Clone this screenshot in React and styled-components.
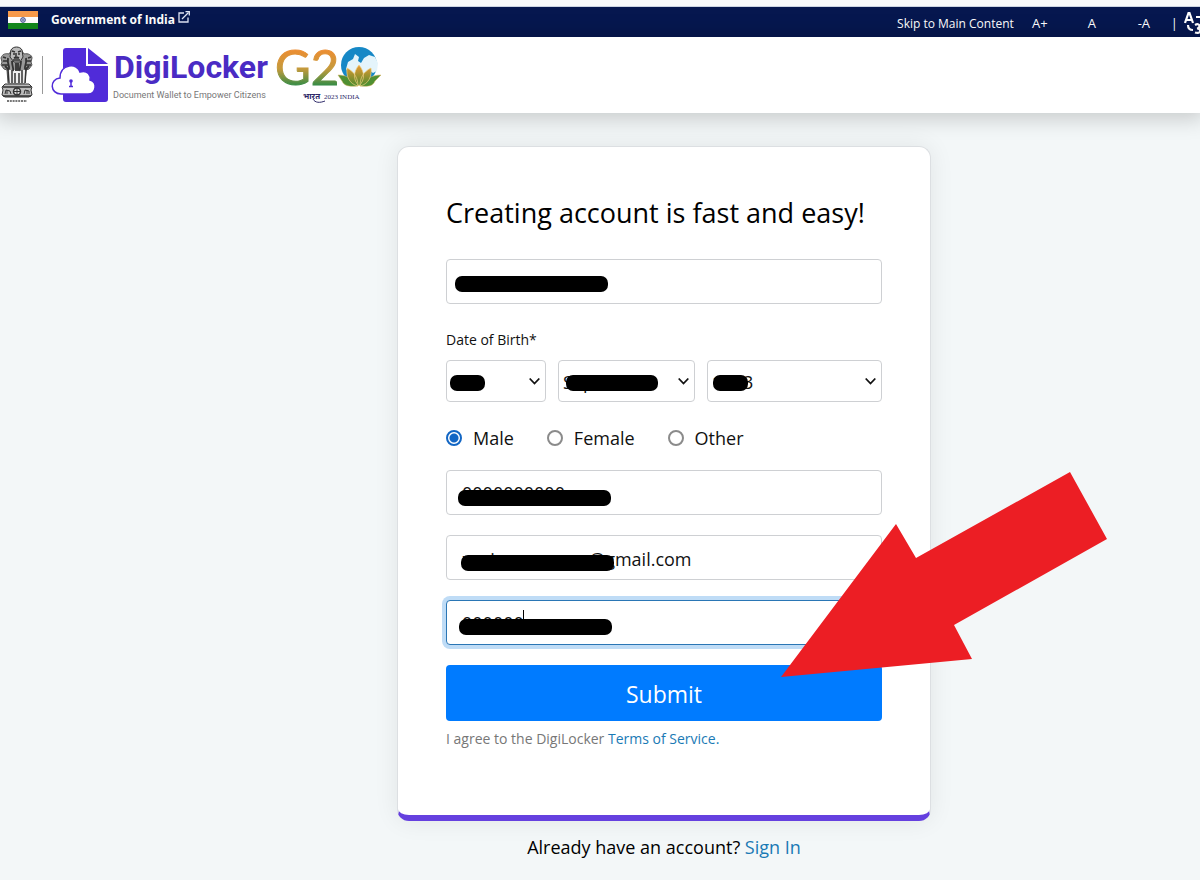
import React from "react";
import styled, { createGlobalStyle } from "styled-components";

const GlobalStyle = createGlobalStyle`
  * {
    box-sizing: border-box;
  }

  body {
    margin: 0;
    background: #f3f7f8;
    color: #111;
    font-family: "Open Sans", "Noto Sans", "Noto Sans CJK SC", sans-serif;
    overflow-x: hidden;
  }

  a {
    color: #1a7ab5;
    text-decoration: none;
  }
`;

const months = ["September", "October", "November"];

const genders = ["Male", "Female", "Other"];

function Flag() {
  return (
    <svg width="30" height="18" viewBox="0 0 30 18" aria-label="Flag of India">
      <rect width="30" height="6" fill="#f79a4b" />
      <rect y="6" width="30" height="6" fill="#fff" />
      <rect y="12" width="30" height="6" fill="#128a1c" />
      <circle cx="15" cy="9" r="2.4" fill="#b9c0dd" stroke="#26357c" strokeWidth="0.8" />
      <circle cx="15" cy="9" r="0.7" fill="#26357c" />
    </svg>
  );
}

function ExternalIcon() {
  return (
    <svg width="12" height="12" viewBox="0 0 12 12" fill="none" stroke="#dfe4f5" strokeWidth="1.3">
      <path d="M6 2H1v9h9V6.500" />
      <path d="M4 8L10.500 1.500" />
      <path d="M7.500 0.700h3.800v3.800" />
    </svg>
  );
}

function TranslateIcon() {
  return (
    <svg width="26" height="24" viewBox="0 0 26 24" fill="none" stroke="#fff" strokeWidth="2.2">
      <path d="M1 12L4.500 2h1L9 12M2.500 9h5" />
      <path d="M12 6h4a4 4 0 0 1 4 4v2" />
      <path d="M4 14c0 3 2 5 5 5" />
      <path d="M11 14c5-3 6 3 2 3.500 5 0 4 6-2 4" />
      <path d="M20 13v9M16 17h4" />
    </svg>
  );
}

function Emblem() {
  return (
    <svg width="34" height="58" viewBox="0 0 34 58" fill="none" stroke="#333" strokeWidth="1">
      <path d="M11 5c1-4 9-4 11 0l2 3c4-1 8 1 8 4l-1 4 1 3-3 4-3 1-1 13H8L7 24l-3-1-3-4 1-3-1-4c1-4 5-5 8-4z" fill="#999" stroke="#555" />
      <path d="M8 24h18l-1 13H8z" fill="#eee" stroke="none" />
      <path d="M11 4c2-4 9-4 11 0l1 7-3 5h-6l-4-5z" fill="#bbb" />
      <path d="M12 5l3 1M18 6l3-1M13 8h2M18 8h2M16 7v4l-2 1h5l-2-1M13 14h7" strokeWidth="1.500" />
      <path d="M3 11l3 1M3 15h4M31 11l-3 1M31 15h-4M2 19h6M31 19h-6" strokeWidth="1.500" />
      <path d="M8 12c-1 7 2 8 1 11M26 12c1 7-2 8-1 11M12 15c0 6 2 7 1 10M21 15c0 6-2 7-1 10M16 17v8M18 17v8M5 20l4 4M29 20l-4 4" strokeWidth="1.800" />
      <path d="M8 23l1 14M12 24v13M15 27v10M19 27v10M22 24v13M26 23l-1 14" stroke="#333" strokeWidth="1.500" />
      <path d="M5 38h24l3 3-1 3 1 5-3 2H5l-3-2 1-5-1-3z" fill="#bbb" />
      <path d="M3 41h28M3 50h28" strokeWidth="1.500" />
      <circle cx="17" cy="45.500" r="3.500" fill="#ddd" strokeWidth="1.500" />
      <path d="M17 42v7M13.500 45.500h7M5 48l1-4 4 1 1 3M24 48l1-4 4 1v3M7 44v4M27 44v4" />
      <path d="M7 55h20" strokeWidth="2" strokeDasharray="2 0.800" stroke="#777" />
    </svg>
  );
}

function LockerMark() {
  return (
    <svg width="58" height="56" viewBox="0 0 58 56">
      <path d="M15 1h20v18h22v33a3 3 0 0 1-3 3H15a3 3 0 0 1-3-3V4a3 3 0 0 1 3-3z" fill="#502bd9" />
      <path d="M37 1l20 16H37z" fill="#502bd9" />
      <path d="M10 47c-11 0-12-15-1-16 0-15 18-15 20-6 8-2 11 3 10 8 8 2 6 14-2 14z" fill="#fff" stroke="#502bd9" strokeWidth="1.500" />
      <circle cx="20" cy="34" r="1.800" fill="#502bd9" />
      <path d="M20 34v6M18 39.500h4" stroke="#502bd9" strokeWidth="1.500" />
    </svg>
  );
}

function G20Logo() {
  return (
    <svg width="106" height="60" viewBox="0 0 106 60" overflow="visible">
      <defs>
        <linearGradient id="tricolor" x1="0" y1="0" x2="0" y2="1">
          <stop offset="0.200" stopColor="#ef8d32" />
          <stop offset="0.550" stopColor="#c49a3c" />
          <stop offset="0.850" stopColor="#2d8b46" />
        </linearGradient>
        <linearGradient id="lotus" x1="0" y1="0" x2="0" y2="1">
          <stop offset="0" stopColor="#ec9a32" />
          <stop offset="1" stopColor="#4d8a2d" />
        </linearGradient>
      </defs>
      <text x="-2" y="40" fontFamily="Lato, sans-serif" fontSize="49" fill="url(#tricolor)" stroke="url(#tricolor)">G2</text>
      <circle cx="82" cy="20" r="18" fill="#1688c6" />
      <path d="M69 24l2-7 5-3 2-5 4 3-1 4 3 2 3-5 5-3 6 2 3 6-1 8-4 2-4-3-3 5-5 2-3-5-4 4-5-2z" fill="#e4f4fb" />
      <path d="M61 30c9 0 15 4 20 11-8 1-14 0-16-5zM104 30c-9 0-16 4-21 11 8 1 13 0 15-5z" fill="#4f8f32" stroke="#d9b15a" strokeWidth="0.500" />
      <path d="M70 23c8 4 11 11 11 18-9-2-12-10-11-18zM94 23c1 8-2 16-11 18 0-8 3-14 11-18zM82 20c6 7 6 15 0 21-6-6-6-14 0-21z" fill="url(#lotus)" stroke="#f0cf80" strokeWidth="0.700" />
      <text x="26" y="54" fontFamily="Noto Sans, Noto Sans Devanagari, sans-serif" fontSize="8" fontWeight="700" fill="#2c2868">भारत</text>
      <text x="47" y="54" fontFamily="Liberation Serif, serif" fontSize="7" fill="#2c2868">2023 INDIA</text>
      <path d="M36 54c2 4 7 4 12 2" stroke="#2c2868" fill="none" />
    </svg>
  );
}

const Strip = styled.div`
  height: 7px;
  background: #f8f9fb;
  border-bottom: 1px solid #ccd4e2;
`;

const TopBar = styled.div`
  display: flex;
  justify-content: space-between;
  height: 30px;
  padding-left: 8px;
  background: #06174f;
  color: #fff;
  overflow: hidden;

  a {
    color: inherit;
  }
`;

const Government = styled.a`
  display: flex;
  align-items: center;
  gap: 13px;
  height: 26px;
  font-size: 12px;
  font-weight: 700;
  line-height: 16px;

  span {
    display: flex;
    gap: 3px;
  }

  span svg {
    margin-top: -1px;
  }
`;

const Tools = styled.nav`
  display: flex;
  align-items: center;
  margin-right: -10px;
  padding-top: 2px;
  font-size: 12px;
  white-space: nowrap;
`;

const SizeButton = styled.button`
  width: 52px;
  padding: 0;
  border: 0;
  background: none;
  color: inherit;
  font: inherit;
  font-size: 13px;
`;

const LanguageButton = styled(SizeButton)`
  display: flex;
  align-items: center;
  gap: 6px;
  width: auto;
  padding-left: 1px;
`;

const Header = styled.header`
  position: relative;
  display: flex;
  align-items: center;
  height: 76px;
  background: #fff;
  box-shadow: 0 2px 20px 4px rgba(0, 0, 0, 0.18);
`;

const Divider = styled.span`
  width: 1px;
  height: 38px;
  margin: 0 8px;
  background: #999;
`;

const Brand = styled.div`
  display: flex;
  flex-direction: column;
  width: 160px;
  margin: 0 4px;
  white-space: nowrap;
`;

const BrandName = styled.span`
  padding-left: 1px;
  color: #4a2bc4;
  font-family: Roboto, sans-serif;
  font-size: 32px;
  font-weight: 700;
  line-height: 40px;
`;

const Tagline = styled.span`
  color: #777;
  font-family: Roboto, sans-serif;
  font-size: 9px;
  line-height: 16px;
`;

const Main = styled.main`
  display: flex;
  flex-direction: column;
  align-items: center;
  padding: 33px 0 20px 128px;
`;

const Card = styled.form`
  position: relative;
  width: 100%;
  max-width: 534px;
  padding: 48px 48px 64px;
  background: #fff;
  border: 1px solid #dcdfe2;
  border-bottom: 6px solid #6540df;
  border-radius: 12px;
  box-shadow: 0 0 24px rgba(0, 0, 0, 0.08);
`;

const Title = styled.h1`
  margin: 0 0 28px;
  color: #000;
  font-size: 27px;
  font-weight: 400;
  line-height: 36px;
  white-space: nowrap;
`;

const Field = styled.label`
  position: relative;
  display: block;
  margin-bottom: 20px;
`;

const TextInput = styled.input`
  display: block;
  width: 100%;
  height: 45px;
  padding: 0 15px;
  border: 1px solid ${({ $active }) => ($active ? "#2a76b5" : "#ced0d3")};
  border-radius: 4px;
  outline: 0;
  background: #fff;
  box-shadow: ${({ $active }) => ($active ? "0 0 0 4px #bfdcf6" : "none")};
  color: #111;
  font: inherit;
  font-size: 18px;

  &[type="email"] {
    padding-top: 3px;
  }
`;

// Opaque bar that hides the private part of a value
const Mask = styled.span`
  position: absolute;
  top: ${({ $top }) => $top}px;
  left: ${({ $left }) => $left}px;
  width: ${({ $width }) => $width}px;
  height: 16px;
  border-radius: 7px;
  background: #000;
  pointer-events: none;
`;

const Caret = styled.span`
  position: absolute;
  top: 10px;
  left: 77px;
  width: 1px;
  height: 16px;
  background: #000;
`;

const DateGroup = styled.fieldset`
  margin: 0 0 24px;
  padding: 4px 0 0;
  border: 0;

  legend {
    padding: 4px 0 0;
    font-size: 14px;
    line-height: 24px;
  }
`;

const DateRow = styled.div`
  display: grid;
  grid-template-columns: 100fr 137fr 175fr;
  gap: 12px;
  margin-top: 4px;
`;

const SelectBox = styled.label`
  position: relative;
  display: block;

  svg {
    position: absolute;
    top: 17px;
    right: 6px;
    pointer-events: none;
  }
`;

const Select = styled.select`
  display: block;
  width: 100%;
  height: 42px;
  padding: 2px 4px 0;
  appearance: none;
  border: 1px solid #ced0d3;
  border-radius: 4px;
  background: #fff;
  color: #111;
  font: inherit;
  font-size: 18px;
`;

const GenderGroup = styled.div`
  display: flex;
  gap: 33px;
  margin-bottom: 20px;
`;

const Radio = styled.label`
  display: flex;
  align-items: center;
  gap: 11px;
  height: 24px;
  font-size: 18px;

  input {
    width: 16px;
    height: 16px;
    margin: 0;
    appearance: none;
    border: 2px solid #8b8b8b;
    border-radius: 50%;
    background: #fff;
  }

  input:checked {
    border-color: #1266c4;
    background: radial-gradient(circle, #1266c4 4px, #fff 5px);
  }
`;

const Submit = styled.button`
  display: block;
  width: 100%;
  height: 56px;
  padding-top: 2px;
  border: 0;
  border-radius: 4px;
  background: #007bff;
  color: #fff;
  font: inherit;
  font-size: 23px;
`;

const Agreement = styled.p`
  margin: 6px 0 0;
  color: #777;
  font-size: 14px;
  line-height: 24px;
`;

const SignIn = styled.p`
  margin: 12px 0 0;
  color: #000;
  font-size: 18px;
  line-height: 28px;
`;

const Arrow = styled.svg`
  position: absolute;
  top: 325px;
  right: -178px;
  pointer-events: none;
`;

function DateSelect({ label, options, mask }) {
  return (
    <SelectBox>
      <Select aria-label={label}>
        {options.map((option) => (
          <option key={option}>{option}</option>
        ))}
      </Select>
      <Mask $top={15} $left={mask[0]} $width={mask[1]} />
      <svg width="11" height="9" viewBox="0 0 11 9" fill="none" stroke="#111" strokeWidth="1.800">
        <path d="M0.700 1.500l4.800 5 4.800-5" />
      </svg>
    </SelectBox>
  );
}

function MaskedInput({ mask, active, ...rest }) {
  return (
    <Field>
      <TextInput $active={active} {...rest} />
      {active && <Caret />}
      <Mask $top={mask[0]} $left={mask[1]} $width={153} />
    </Field>
  );
}

function App() {
  return (
    <>
      <GlobalStyle />
      <Strip />
      <TopBar>
        <Government href="#india">
          <Flag />
          <span>
            Government of India <ExternalIcon />
          </span>
        </Government>
        <Tools>
          <a href="#main">Skip to Main Content</a>
          <SizeButton>A+</SizeButton>
          <SizeButton>A</SizeButton>
          <SizeButton>-A</SizeButton>
          <LanguageButton aria-label="Language">
            | <TranslateIcon />
          </LanguageButton>
        </Tools>
      </TopBar>
      <Header>
        <Emblem />
        <Divider />
        <LockerMark />
        <Brand>
          <BrandName>DigiLocker</BrandName>
          <Tagline>Document Wallet to Empower Citizens</Tagline>
        </Brand>
        <G20Logo />
      </Header>
      <Main id="main">
        <Card onSubmit={(e) => e.preventDefault()}>
          <Title>Creating account is fast and easy!</Title>
          <MaskedInput aria-label="Full name" defaultValue="XXXXXXX XXXXXR" mask={[17, 9]} />
          <DateGroup>
            <legend>Date of Birth*</legend>
            <DateRow>
              <DateSelect label="Day" options={["00"]} mask={[4, 35]} />
              <DateSelect label="Month" options={months} mask={[8, 92]} />
              <DateSelect label="Year" options={["1003"]} mask={[6, 35]} />
            </DateRow>
          </DateGroup>
          <GenderGroup role="radiogroup" aria-label="Gender">
            {genders.map((gender) => (
              <Radio key={gender}>
                <input type="radio" name="gender" defaultChecked={gender === "Male"} />
                {gender}
              </Radio>
            ))}
          </GenderGroup>
          <MaskedInput aria-label="Mobile number" type="tel" defaultValue="0000000000" mask={[20, 12]} />
          <MaskedInput aria-label="Email" type="email" defaultValue="xxxixxxxxxxxxx@gmail.com" mask={[20, 15]} />
          <MaskedInput aria-label="Security PIN" defaultValue="000000" mask={[19, 13]} active />
          <Submit type="submit">Submit</Submit>
          <Agreement>
            I agree to the DigiLocker <a href="#terms">Terms of Service.</a>
          </Agreement>
          <Arrow width="328" height="206" viewBox="0 0 328 206" aria-hidden="true">
            <path d="M1 205L116 52l20 34L290 0l37 67-153 86 18 34z" fill="#ec1e24" />
          </Arrow>
        </Card>
        <SignIn>
          Already have an account? <a href="#signin">Sign In</a>
        </SignIn>
      </Main>
    </>
  );
}

export default App;
